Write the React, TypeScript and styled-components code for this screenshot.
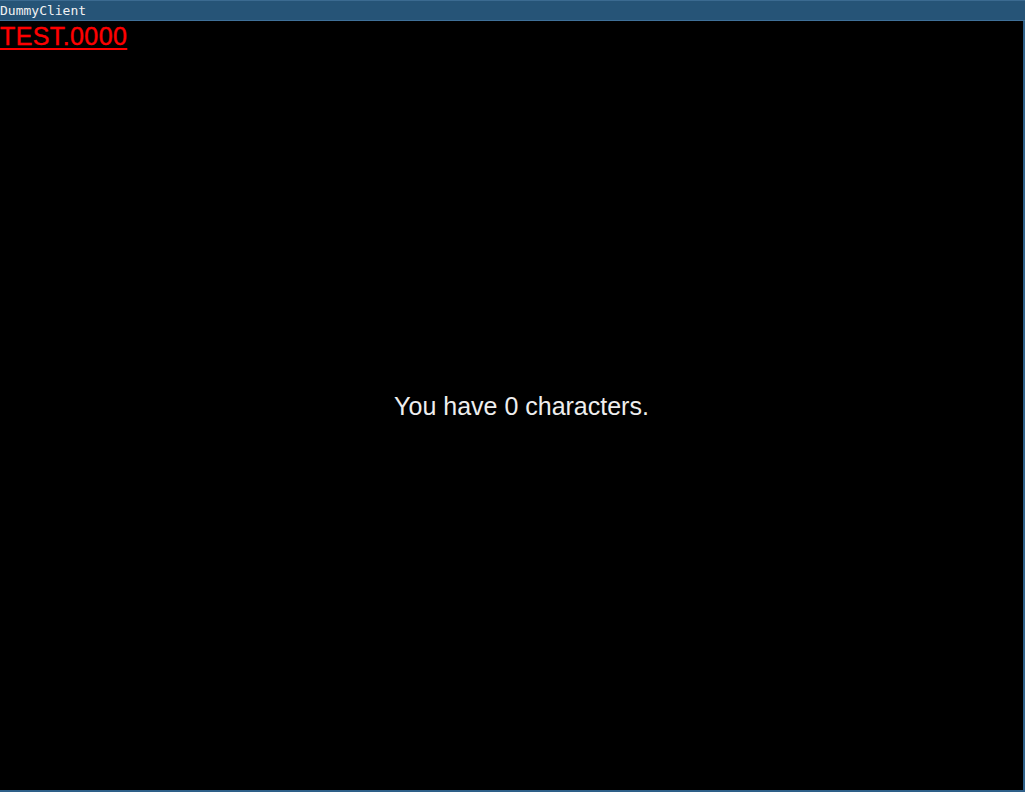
import styled, { createGlobalStyle } from 'styled-components';

const GlobalStyle = createGlobalStyle`
  html, body {
    margin: 0;
    padding: 0;
    background: #ffffff;
  }
`;

const Window = styled.div`
  display: flex;
  flex-direction: column;
  width: 1025px;
  height: 792px;
  box-sizing: border-box;
`;

const TitleBar = styled.div`
  height: 21px;
  box-sizing: border-box;
  background: #265477;
  border-top: 1px solid #3b6a90;
  border-bottom: 1px solid #3f7099;
  display: flex;
  align-items: center;
  font-family: 'DejaVu Sans Mono', monospace;
  font-size: 13px;
  color: #f2f2f2;
  line-height: 1;
`;

const Body = styled.div`
  flex: 1;
  display: flex;
  flex-direction: column;
  background: #000000;
  border-right: 2px solid #2e6089;
  border-bottom: 2px solid #2e6089;
  font-family: 'Liberation Sans', Arial, sans-serif;
`;

const AccountLink = styled.a`
  align-self: flex-start;
  color: #ff0000;
  font-size: 25px;
  letter-spacing: 0.4px;
  -webkit-text-stroke: 0.4px #ff0000;
  line-height: 31px;
  text-decoration: underline;
  text-decoration-thickness: 2px;
  text-underline-offset: 3px;
`;

const Center = styled.div`
  flex: 1;
  display: flex;
  align-items: center;
  justify-content: center;
  padding-left: 20px;
  padding-bottom: 29px;
`;

const Message = styled.p`
  margin: 0;
  color: #eeeeee;
  font-size: 25px;
`;

export default function App() {
  return (
    <>
      <GlobalStyle />
      <Window>
        <TitleBar>DummyClient</TitleBar>
        <Body>
          <AccountLink href="#">TEST.0000</AccountLink>
          <Center>
            <Message>You have 0 characters.</Message>
          </Center>
        </Body>
      </Window>
    </>
  );
}
